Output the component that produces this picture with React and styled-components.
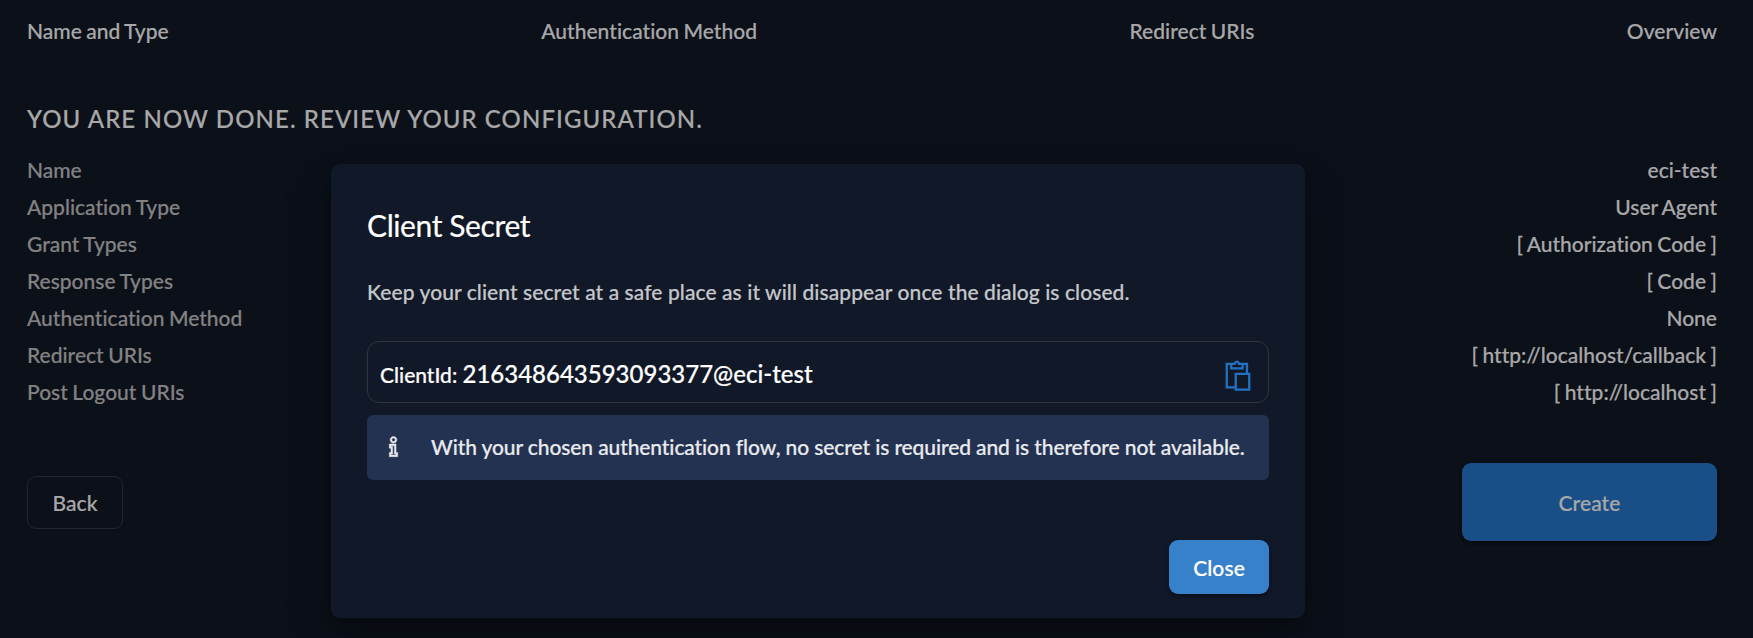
import React from "react";
import styled, { createGlobalStyle } from "styled-components";
import { LiaPasteSolid, LiaInfoSolid } from "react-icons/lia";

const GlobalStyle = createGlobalStyle`
  * { box-sizing: border-box; }
  html, body { margin: 0; height: 638px; overflow: hidden; background: #0c1019; }
  body, button { font-family: Lato, "Liberation Sans", sans-serif; font-size: 21px; font-weight: 500; font-variant-ligatures: none; -webkit-text-stroke: 0.2px currentColor; }
`;

const Page = styled.main`
  height: 638px;
  padding: 16px 36px 0 27px;
  background: #0c1019;
  color: #a8a8a9;
`;

const Steps = styled.nav`
  display: flex;
  justify-content: space-between;
  line-height: 30px;
  letter-spacing: 0.04px;
  word-spacing: -1px;
`;

const Heading = styled.h2`
  margin: 55px 0 0;
  font-size: 24px;
  font-weight: 500;
  line-height: 36px;
  letter-spacing: 1.08px;
  text-transform: uppercase;
`;

const Summary = styled.dl`
  margin: 14px 0 0;
  word-spacing: -0.8px;
`;

const Row = styled.div`
  display: flex;
  justify-content: space-between;
  height: 37px;
  line-height: 37px;
`;

const Term = styled.dt`
  color: #828283;
`;

const Value = styled.dd`
  margin: 0;
`;

const Actions = styled.div`
  display: flex;
  justify-content: space-between;
  align-items: center;
  margin-top: 53px;
`;

const Button = styled.button`
  display: flex;
  align-items: center;
  justify-content: center;
  width: ${(p) => p.$width}px;
  height: ${(p) => p.$height}px;
  padding: 0;
  border: ${(p) => (p.$outlined ? "1px solid #22262e" : "0")};
  border-radius: 9px;
  background: ${(p) => p.$fill || "transparent"};
  color: ${(p) => p.$ink || "#a8a8a9"};
  letter-spacing: 0.1px;
  box-shadow: ${(p) => (p.$outlined ? "none" : "0 3px 3px -1px rgba(0,0,0,.2), 0 2px 3px rgba(0,0,0,.14), 0 1px 5px rgba(0,0,0,.12)")};
`;

const Dialog = styled.section`
  position: absolute;
  left: 331px;
  top: 164px;
  width: 974px;
  height: 454px;
  padding: 36px 36px 24px;
  display: flex;
  flex-direction: column;
  border-radius: 9px;
  background: #111827;
  color: #fff;
  box-shadow: 0 11px 15px -7px rgba(0,0,0,.2), 0 24px 38px 3px rgba(0,0,0,.14), 0 9px 46px 8px rgba(0,0,0,.12);
`;

const Title = styled.h1`
  margin: 6px 0 0;
  font-size: 30px;
  font-weight: 400;
  line-height: 38px;
  letter-spacing: -0.4px;
`;

const Description = styled.p`
  margin: 33px 0 0;
  line-height: 30px;
  letter-spacing: 0.08px;
  color: #c4c6ca;
`;

const ClientBox = styled.div`
  display: flex;
  flex: none;
  align-items: center;
  justify-content: space-between;
  height: 62px;
  margin-top: 34px;
  padding: 2px 12px 0;
  border: 1px solid #303541;
  border-radius: 12px;

  svg {
    margin-top: 4px;
  }
`;

const ClientId = styled.span`
  font-size: 24px;
`;

const Banner = styled.div`
  display: flex;
  flex: none;
  align-items: center;
  height: 65px;
  margin-top: 12px;
  padding: 0 0 3px 13px;
  gap: 24px;
  border-radius: 6px;
  background: #243252;
  color: #e9ebee;
  white-space: nowrap;
  letter-spacing: -0.1px;

  svg {
    stroke: currentColor;
    stroke-width: 0.5px;
  }
`;

const DialogActions = styled.div`
  display: flex;
  justify-content: flex-end;
  margin-top: 60px;
`;

const steps = ["Name and Type", "Authentication Method", "Redirect URIs", "Overview"];

const config = [
  ["Name", "eci-test"],
  ["Application Type", "User Agent"],
  ["Grant Types", "[ Authorization Code ]"],
  ["Response Types", "[ Code ]"],
  ["Authentication Method", "None"],
  ["Redirect URIs", "[ http://localhost/callback ]"],
  ["Post Logout URIs", "[ http://localhost ]"],
];

export default function App() {
  return (
    <>
      <GlobalStyle />
      <Page>
        <Steps>
          {steps.map((s) => <span key={s}>{s}</span>)}
        </Steps>
        <Heading>You are now done. Review your configuration.</Heading>
        <Summary>
          {config.map(([term, value]) => (
            <Row key={term}>
              <Term>{term}</Term>
              <Value>{value}</Value>
            </Row>
          ))}
        </Summary>
        <Actions>
          <Button $outlined $width={96} $height={53}>Back</Button>
          <Button $width={255} $height={78} $fill="#194f86">Create</Button>
        </Actions>
      </Page>
      <Dialog role="dialog">
        <Title>Client Secret</Title>
        <Description>Keep your client secret at a safe place as it will disappear once the dialog is closed.</Description>
        <ClientBox>
          <span>ClientId: <ClientId>216348643593093377@eci-test</ClientId></span>
          <LiaPasteSolid size={36} color="#2073c4" />
        </ClientBox>
        <Banner>
          <LiaInfoSolid size={27} />
          <span>With your chosen authentication flow, no secret is required and is therefore not available.</span>
        </Banner>
        <DialogActions>
          <Button $width={100} $height={54} $fill="#3781cb" $ink="#fff">Close</Button>
        </DialogActions>
      </Dialog>
    </>
  );
}
